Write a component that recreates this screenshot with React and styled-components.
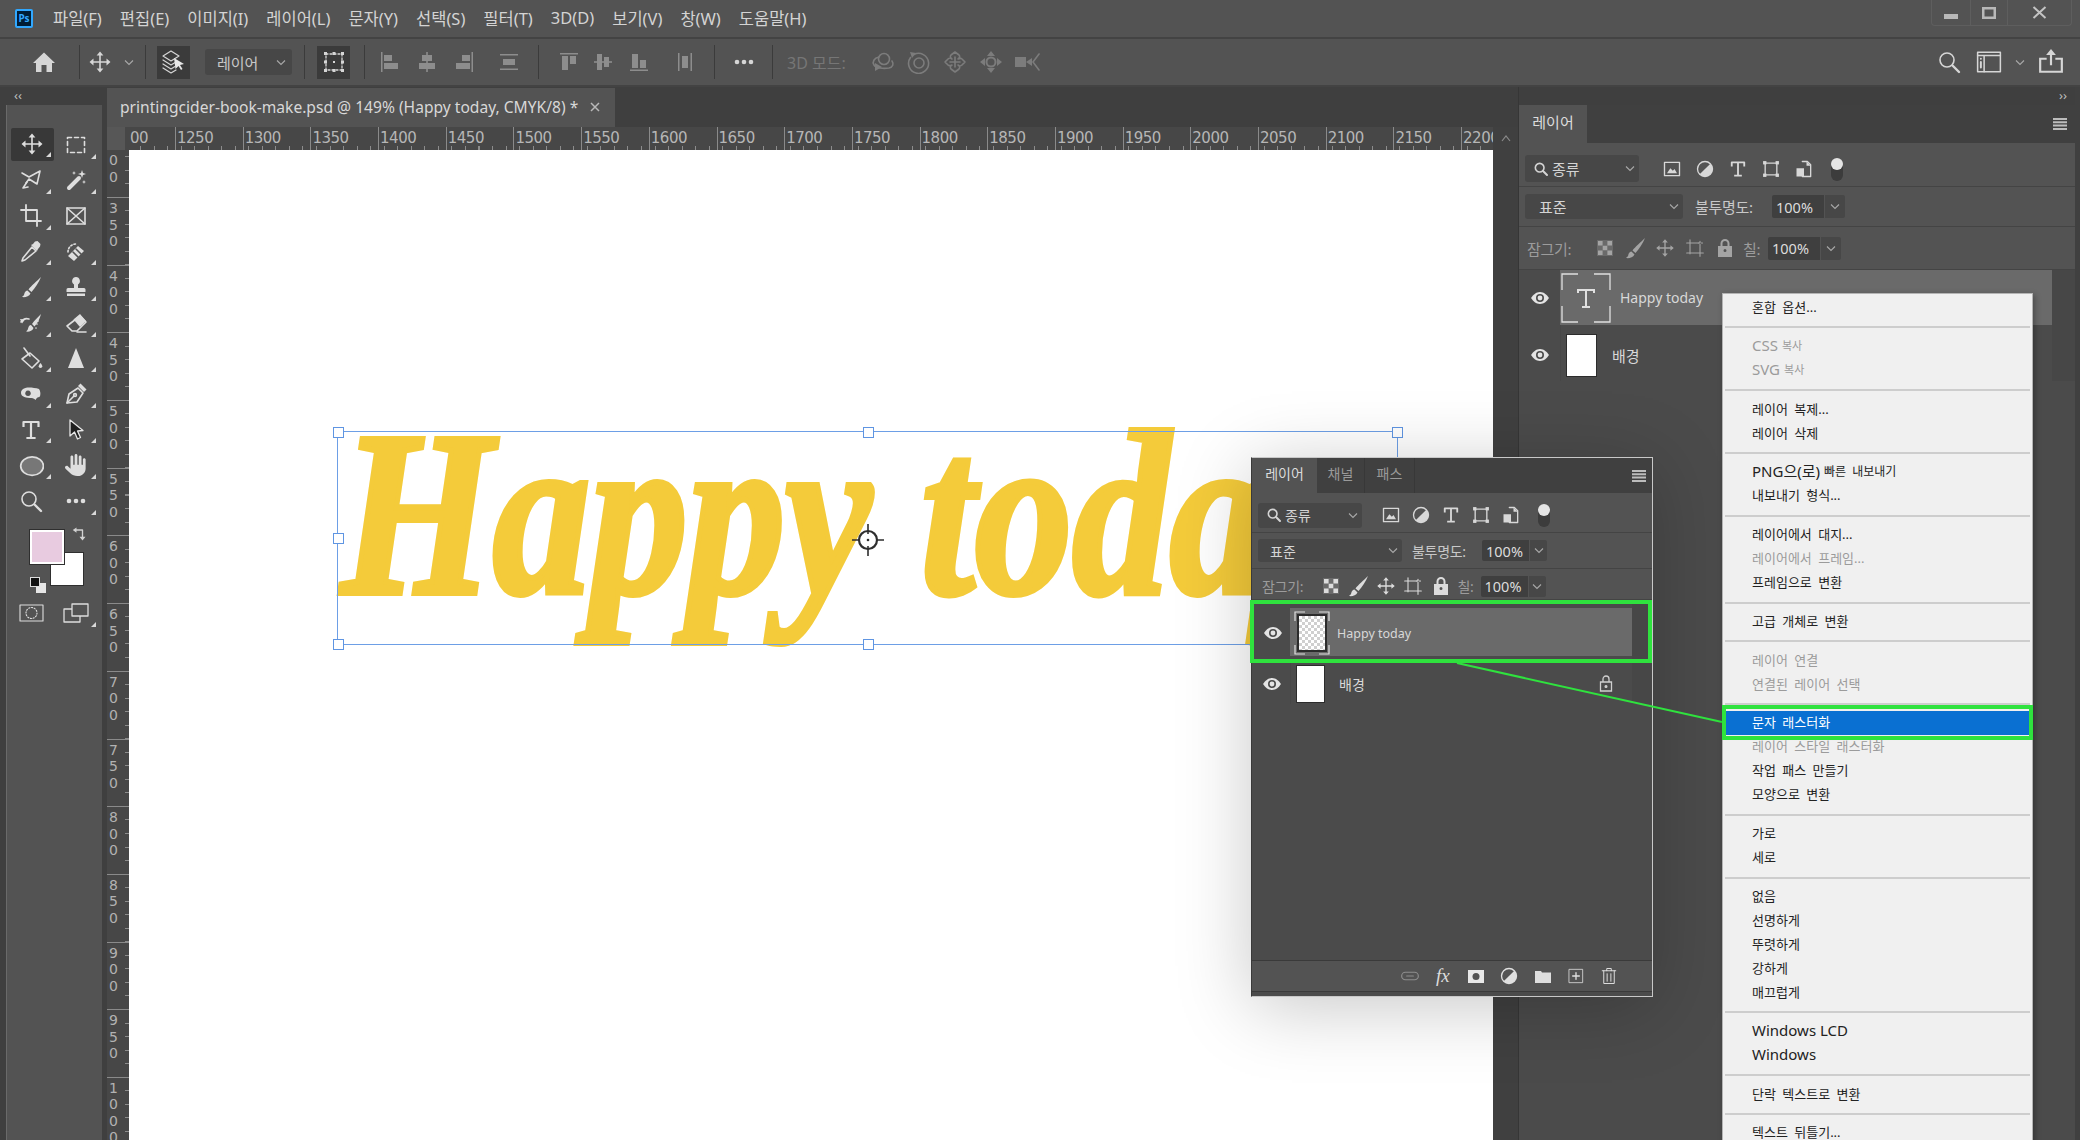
import React from "react";
import styled, { createGlobalStyle } from "styled-components";
import { FaHand } from "react-icons/fa6";

const UI_FONT = `"Noto Sans", "Noto Sans CJK KR", sans-serif`;

const GlobalStyle = createGlobalStyle`
  html, body { margin: 0; padding: 0; background: #404040; }
  * { box-sizing: border-box; }
`;

const Frame = styled.div`
  position: relative;
  width: 2080px;
  height: 1140px;
  overflow: hidden;
  display: flex;
  flex-direction: column;
  background: #404040;
  font-family: ${UI_FONT};
  color: #d2d2d2;
`;

/* title bar */
const TitleBar = styled.div`
  height: 37px;
  flex: none;
  display: flex;
  align-items: flex-start;
  background: #535353;
`;
const PsLogo = styled.div`
  width: 18px;
  height: 19px;
  margin: 9px 20px 0 15px;
  flex: none;
  border: 2px solid #31a8ff;
  border-radius: 2px;
  background: #001e36;
  color: #31a8ff;
  font-size: 10px;
  font-weight: 700;
  line-height: 15px;
  text-align: center;
`;
const MenuBar = styled.div`
  display: flex;
  gap: 18px;
  height: 37px;
  padding-bottom: 2px;
  align-items: center;
`;
const MenuLabel = styled.span`
  font-size: 16.5px;
  color: #d4d4d4;
  white-space: nowrap;
`;
const WindowControls = styled.div`
  margin-left: auto;
  margin-right: 8px;
  display: flex;
  height: 26px;
  border: 1px solid #5e5e5e;
  border-top: 0;
  border-radius: 0 0 4px 4px;
`;
const WinButton = styled.div`
  width: ${(p) => p.$w}px;
  display: flex;
  align-items: center;
  justify-content: center;
  border-left: ${(p) => (p.$first ? "0" : "1px solid #5e5e5e")};
`;

/* options bar */
const OptionsBar = styled.div`
  height: 50px;
  flex: none;
  display: flex;
  align-items: center;
  padding: 0 11px 0 9px;
  background: #535353;
  border-top: 2px solid #434343;
  border-bottom: 2px solid #434343;
  color: #d6d6d6;
`;
const Cell = styled.div`
  width: ${(p) => p.$w}px;
  margin-left: ${(p) => p.$ml || 0}px;
  flex: none;
  display: flex;
  align-items: center;
  justify-content: center;
  color: ${(p) => p.$color || "inherit"};
`;
const OptSep = styled.div`
  width: 1px;
  height: 34px;
  flex: none;
  margin-left: ${(p) => p.$ml || 0}px;
  background: #3b3b3b;
`;
const DarkButton = styled.div`
  width: 33px;
  height: 33px;
  flex: none;
  margin-left: ${(p) => p.$ml || 0}px;
  display: flex;
  align-items: center;
  justify-content: center;
  background: #3b3b3b;
`;
const OptSelect = styled.div`
  width: 87px;
  height: 26px;
  margin-left: 15px;
  flex: none;
  display: flex;
  align-items: center;
  justify-content: space-between;
  padding: 0 6px 0 12px;
  border-radius: 3px;
  background: #474747;
  font-size: 15px;
  color: #c8c8c8;
`;
const DimLabel = styled.span`
  margin-left: 14px;
  width: 63px;
  flex: none;
  font-size: 16px;
  color: #767676;
  white-space: nowrap;
`;
const Spacer = styled.div`
  flex: 1;
`;

/* workspace */
const Workspace = styled.div`
  flex: 1;
  display: flex;
  min-height: 0;
`;
const ToolDock = styled.div`
  width: 107px;
  flex: none;
  display: flex;
  flex-direction: column;
  background: #3f3f3f;
  padding-right: 5px;
`;
const CollapseBar = styled.div`
  height: 18px;
  flex: none;
  display: flex;
  align-items: center;
  justify-content: ${(p) => (p.$right ? "flex-end" : "flex-start")};
  padding: 0 8px 3px 14px;
  font-size: 13px;
  color: #bdbdbd;
  background: #3f3f3f;
`;
const ToolPanel = styled.div`
  flex: 1;
  margin-left: 6px;
  border-left: 1px solid #6a6a6a;
  background: #535353;
  padding: 22px 0 0 1.5px;
`;
const ToolGrid = styled.div`
  display: grid;
  grid-template-columns: 45px 45px;
  grid-auto-rows: 35.6px;
`;
const ToolCell = styled.div`
  position: relative;
  display: flex;
  align-items: center;
  justify-content: center;
  color: #dedede;
  background: ${(p) => (p.$active ? "#383838" : "transparent")};
  border-radius: 2px;
  margin: ${(p) => (p.$active ? "1px 0 2px 2px" : "0")};
  &::after {
    content: "";
    display: ${(p) => (p.$corner ? "block" : "none")};
    position: absolute;
    right: 3px;
    bottom: 4px;
    border-style: solid;
    border-width: 0 0 5px 5px;
    border-color: transparent transparent #d8d8d8 transparent;
  }
`;
const SwatchBox = styled.div`
  position: relative;
  height: 62px;
  margin-top: 11px;
`;
const Swatch = styled.div`
  position: absolute;
  left: ${(p) => p.$x}px;
  top: ${(p) => p.$y}px;
  width: ${(p) => p.$s}px;
  height: ${(p) => p.$s}px;
  background: ${(p) => p.$c};
  border: ${(p) => p.$border || "none"};
  outline: ${(p) => p.$outline || "none"};
`;
const MaskRow = styled.div`
  display: grid;
  grid-template-columns: 45px 45px;
  height: 36px;
  margin-top: 3px;
`;

const DocColumn = styled.div`
  flex: 1;
  min-width: 0;
  display: flex;
  flex-direction: column;
`;
const TabRow = styled.div`
  height: 40px;
  flex: none;
  display: flex;
  background: #3f3f3f;
`;
const DocTab = styled.div`
  width: 508px;
  display: flex;
  align-items: center;
  justify-content: space-between;
  padding: 0 15px 2px 13px;
  margin-top: 1px;
  background: #535353;
  font-size: 15.6px;
  color: #d8d8d8;
  white-space: nowrap;
`;
const TopRulerRow = styled.div`
  height: 23px;
  flex: none;
  display: flex;
`;
const RulerCorner = styled.div`
  width: 22px;
  flex: none;
  background: #575757;
  border-right: 4px solid #474747;
`;
const TopRuler = styled.div`
  flex: 1;
  min-width: 0;
  overflow: hidden;
  display: flex;
  background-color: #474747;
  background-image: repeating-linear-gradient(
    to right,
    #8c8c8c 0 1px,
    transparent 1px 13.54px
  );
  background-size: 100% 4px;
  background-position: 11px bottom;
  background-repeat: no-repeat;
`;
const TopRulerCell = styled.div`
  width: ${(p) => p.$w}px;
  flex: none;
  padding-left: 1px;
  border-left: ${(p) => (p.$plain ? "0" : "1px solid #8a8a8a")};
  font-family: "DejaVu Sans", sans-serif;
  font-size: 15px;
  line-height: 22px;
  color: #b6b6b6;
  letter-spacing: -0.5px;
  white-space: nowrap;
`;
const GutterTop = styled.div`
  width: 25px;
  flex: none;
  background: #404040;
  display: flex;
  align-items: center;
  justify-content: center;
  color: #8a8a8a;
`;
const DocBody = styled.div`
  flex: 1;
  min-height: 0;
  display: flex;
`;
const LeftRuler = styled.div`
  width: 22px;
  flex: none;
  overflow: hidden;
  background-color: #474747;
  background-image: repeating-linear-gradient(
    to bottom,
    #8c8c8c 0 1px,
    transparent 1px 13.54px
  );
  background-size: 4px 100%;
  background-position: right 6px;
  background-repeat: no-repeat;
`;
const LeftRulerCell = styled.div`
  height: ${(p) => p.$h}px;
  display: flex;
  flex-direction: column;
  padding: 2px 0 0 2px;
  border-top: ${(p) => (p.$plain ? "0" : "1px solid #8a8a8a")};
  font-family: "DejaVu Sans", sans-serif;
  font-size: 14px;
  line-height: 16.5px;
  color: #b2b2b2;
  overflow: hidden;
`;
const Canvas = styled.div`
  position: relative;
  flex: 1;
  background: #fff;
  overflow: hidden;
`;
const ArtText = styled.div`
  position: absolute;
  left: 212px;
  top: 247px;
  font-family: "Liberation Serif", serif;
  font-style: italic;
  font-weight: 700;
  font-size: 235px;
  line-height: 1;
  color: #f4cb3a;
  -webkit-text-stroke: 6px #f4cb3a;
  white-space: nowrap;
  transform-origin: left top;
  transform: scaleX(0.83);
`;
const SelectBox = styled.div`
  position: absolute;
  left: 208px;
  top: 281px;
  width: 1061px;
  height: 214px;
  border: 1px solid #6d9fe6;
`;
const Handle = styled.div`
  position: absolute;
  left: ${(p) => p.$x}%;
  top: ${(p) => p.$y}%;
  width: 11px;
  height: 11px;
  margin: -5px 0 0 -5px;
  background: #fff;
  border: 1px solid #5f95e2;
`;
const Anchor = styled.svg`
  position: absolute;
  left: 722px;
  top: 373px;
`;
const Gutter = styled.div`
  width: 25px;
  flex: none;
  background: #404040;
`;

/* layer panels */
const RightDock = styled.div`
  width: 562px;
  flex: none;
  display: flex;
  flex-direction: column;
  background: #404040;
  border-left: 1px solid #363636;
  padding-right: 5px;
`;
const PanelBody = styled.div`
  flex: 1;
  display: flex;
  flex-direction: column;
  background: #4b4b4b;
  min-height: 0;
`;
const TabStrip = styled.div`
  height: ${(p) => p.$h}px;
  flex: none;
  display: flex;
  align-items: stretch;
  background: #404040;
`;
const PanelTab = styled.div`
  width: ${(p) => p.$w}px;
  display: flex;
  align-items: center;
  justify-content: center;
  padding-bottom: 5px;
  font-size: ${(p) => p.$size || 15}px;
  color: ${(p) => (p.$on ? "#dcdcdc" : "#9a9a9a")};
  background: ${(p) => (p.$on ? "#535353" : "transparent")};
  border-right: ${(p) => (p.$on ? "0" : "1px solid #383838")};
`;
const PanelMenu = styled.div`
  margin-left: auto;
  width: ${(p) => p.$w}px;
  display: flex;
  align-items: center;
  justify-content: center;
`;
const ToolRow = styled.div`
  height: ${(p) => p.$h}px;
  flex: none;
  display: flex;
  align-items: center;
  padding-left: ${(p) => p.$pad}px;
  padding-top: ${(p) => p.$pt || 0}px;
  background: #535353;
  border-bottom: 1px solid #444;
  font-size: ${(p) => p.$size || 15}px;
  color: ${(p) => p.$color || "#d8d8d8"};
`;
const Field = styled.div`
  width: ${(p) => p.$w}px;
  height: ${(p) => p.$h}px;
  margin-left: ${(p) => p.$ml || 0}px;
  flex: none;
  display: flex;
  align-items: center;
  gap: 3px;
  padding: 0 4px 0 ${(p) => p.$pl || 6}px;
  border-radius: 3px;
  background: #474747;
  color: #d4d4d4;
  white-space: nowrap;
  & > svg:last-child {
    margin-left: auto;
  }
`;
const InputField = styled.div`
  width: ${(p) => p.$w}px;
  height: ${(p) => p.$h}px;
  margin-left: ${(p) => p.$ml || 0}px;
  flex: none;
  display: flex;
  align-items: center;
  padding-left: 4px;
  background: #3f3f3f;
  border-radius: 2px 0 0 2px;
  font-size: 14.5px;
  color: #dcdcdc;
`;
const InputChevron = styled.div`
  width: ${(p) => p.$w}px;
  height: ${(p) => p.$h}px;
  margin-left: 1px;
  flex: none;
  display: flex;
  align-items: center;
  justify-content: center;
  background: #474747;
  border-radius: 0 2px 2px 0;
`;
const RowLabel = styled.span`
  width: ${(p) => p.$w}px;
  margin-left: ${(p) => p.$ml || 0}px;
  flex: none;
  color: ${(p) => (p.$dim ? "#9c9c9c" : "#c8c8c8")};
  white-space: nowrap;
  letter-spacing: -0.3px;
`;
const LayerList = styled.div`
  flex: 1;
  display: flex;
  flex-direction: column;
  background: #4b4b4b;
`;
const LayerRow = styled.div`
  height: ${(p) => p.$h}px;
  flex: none;
  display: flex;
  border: ${(p) => (p.$framed ? "4px solid #2fe23e" : "0")};
  margin-left: ${(p) => (p.$framed ? "-2px" : "0")};
  background: #4b4b4b;
`;
const EyeCell = styled.div`
  width: ${(p) => p.$w}px;
  flex: none;
  display: flex;
  align-items: center;
  justify-content: center;
  padding: ${(p) => p.$pt || 0}px 0 0 ${(p) => p.$pl || 0}px;
  color: #e4e4e4;
`;
const LayerMain = styled.div`
  flex: 1;
  min-width: 0;
  display: flex;
  align-items: center;
  gap: ${(p) => p.$gap}px;
  padding: ${(p) => p.$pt || 0}px 0 0 ${(p) => p.$pl || 0}px;
  margin: ${(p) => (p.$framed ? "4px 0 3px" : "0")};
  background: ${(p) => (p.$on ? "#6a6a6a" : "transparent")};
  font-size: ${(p) => p.$size}px;
  color: #d8d8d8;
  border-left: 1px solid ${(p) => (p.$on ? "#6a6a6a" : "#474747")};
`;
const LayerStrip = styled.div`
  width: ${(p) => p.$w}px;
  flex: none;
  background: #474747;
`;
const WhiteThumb = styled.div`
  width: ${(p) => p.$w}px;
  height: ${(p) => p.$h}px;
  flex: none;
  background: #fff;
  border: 1px solid #2c2c2c;
`;
const CheckerThumb = styled.div`
  position: relative;
  width: 30px;
  height: 38px;
  flex: none;
  border: 2px solid #2c2c2c;
  background: repeating-conic-gradient(#cfcfcf 0 25%, #fff 0 50%) 0 0 / 6px 6px;
  & > svg {
    position: absolute;
    left: -5px;
    top: -5px;
  }
`;
const LockSlot = styled.div`
  margin-left: auto;
  margin-right: ${(p) => p.$mr}px;
  display: flex;
  color: #cfcfcf;
`;

const FloatingPanel = styled.div`
  position: absolute;
  left: 1251px;
  top: 457px;
  width: 402px;
  height: 540px;
  display: flex;
  flex-direction: column;
  background: #4b4b4b;
  border: 1px solid #c8c8c8;
  border-left-color: #3a3a3a;
  box-shadow: 0 10px 70px rgba(0, 0, 0, 0.22);
`;
const BottomBar = styled.div`
  height: 32px;
  flex: none;
  margin-bottom: 4px;
  display: flex;
  align-items: center;
  justify-content: flex-end;
  padding-right: 26px;
  background: #535353;
  border-top: 1px solid #3a3a3a;
  border-bottom: 1px solid #3a3a3a;
  color: #e0e0e0;
`;

/* context menu */
const ContextMenu = styled.div`
  position: absolute;
  left: 1722px;
  top: 293px;
  width: 311px;
  height: 900px;
  padding: 2px 2px 0;
  background: #f0f0f0;
  border: 1px solid #b4b4b4;
  box-shadow: 2px 2px 6px rgba(0, 0, 0, 0.3);
  font-size: 13px;
  color: #222;
`;
const MenuItem = styled.div`
  position: relative;
  height: 24px;
  display: flex;
  align-items: center;
  gap: 4px;
  padding: 0 0 3px 27px;
  white-space: nowrap;
  word-spacing: ${(p) => (p.$size ? "0" : "3px")};
  color: ${(p) => (p.$off ? "#9b9b9b" : p.$hot ? "#fff" : "#222")};
  background: ${(p) => (p.$hot ? "#0a70d2" : "transparent")};
  font-size: ${(p) => p.$size || 13}px;
  &::after {
    content: "";
    display: ${(p) => (p.$hot ? "block" : "none")};
    position: absolute;
    inset: -6px -3px -5px -3px;
    border: 4px solid #2fe23e;
  }
`;
const MenuSmall = styled.span`
  font-size: ${(p) => p.$size}px;
  color: ${(p) => p.$color || "inherit"};
`;
const MenuRule = styled.div`
  height: 2px;
  margin: 6.4px 0;
  background: #cdcdcd;
`;
const Connector = styled.svg`
  position: absolute;
  left: 0;
  top: 0;
  pointer-events: none;
`;

/* small drawings */
const Svg = ({ s = 24, w, h, vb = "0 0 24 24", children, ...rest }) => (
  <svg
    width={w || s}
    height={h || s}
    viewBox={vb}
    fill="none"
    stroke="currentColor"
    strokeWidth="1.6"
    strokeLinecap="round"
    strokeLinejoin="round"
    {...rest}
  >
    {children}
  </svg>
);
const F = { fill: "currentColor", stroke: "none" };

const Chev = ({ c = "#a8a8a8" }) => (
  <svg width="10" height="7" viewBox="0 0 10 7" fill="none" stroke={c} strokeWidth="1.1">
    <path d="M1 1.500 L5 5.500 L9 1.500" />
  </svg>
);
const MoveIcon = ({ s = 24 }) => (
  <Svg s={s}>
    <path d="M12 4v16M4 12h16" />
    <path {...F} d="M12 1.500l3.400 4h-6.800zM12 22.500l3.400-4h-6.800zM1.500 12l4-3.400v6.800zM22.500 12l-4-3.400v6.800z" />
  </Svg>
);
const Marquee = () => (
  <Svg><rect x="3.500" y="4.500" width="17" height="15" strokeDasharray="4 3" /></Svg>
);
const Lasso = () => (
  <Svg>
    <path d="M3 5l7 4 11-6-3 13-8-5-3 4" />
    <path d="M8 14l-4 6 5-1" />
  </Svg>
);
const Wand = () => (
  <Svg>
    <path strokeWidth="4" d="M5 20L15 10" />
    <path {...F} d="M18 2l1 3 3 1-3 1-1 3-1-3-3-1 3-1zM10 3l.6 1.400L12 5l-1.400.6L10 7l-.6-1.400L8 5l1.400-.6zM20 12l.6 1.400 1.400.6-1.400.6-.6 1.400-.6-1.400-1.400-.6 1.400-.6z" />
  </Svg>
);
const Crop = () => (
  <Svg><path d="M2 6h4M7 1v16h13M7 6h11v16M20 17h2" strokeWidth="1.800" /></Svg>
);
const FrameTool = () => (
  <Svg>
    <rect x="3" y="4" width="18" height="16" />
    <path d="M3 4l18 16M21 4L3 20" />
  </Svg>
);
const Dropper = () => (
  <Svg>
    <path d="M13 7L4 18l-1 3 3-1 11-9z" />
    <path {...F} d="M12 5l2-1 2-2.500 2.500-.5 3 3-.5 2.500L19 9l-1 2z" />
  </Svg>
);
const Heal = () => (
  <Svg>
    <path {...F} d="M4 16L14 6l6 5-10 10z" />
    <path d="M4 12c0-5 4-8 8-8" strokeDasharray="1.500 2" />
    <path stroke="#535353" d="M9 12l5 5M12 9l5 5" />
  </Svg>
);
const Brush = () => (
  <Svg>
    <path {...F} d="M22 2C18 6 12 11 9.500 14.500l3 2.500C16 13 20 7 22 2zM8.500 15.500c-3 .5-3 3.500-3.500 4.500-.3.8-1.500 1.500-2 2 3 .5 7-.3 8.500-3.500z" />
  </Svg>
);
const Stamp = () => (
  <Svg>
    <path {...F} d="M12 2a4 4 0 0 1 2 7.400V13h6a1.500 1.500 0 0 1 1.500 1.500V17h-19v-2.500A1.500 1.500 0 0 1 4 13h6V9.400A4 4 0 0 1 12 2zM3 18.500h18V21H3z" />
  </Svg>
);
const HistoryBrush = () => (
  <Svg>
    <path {...F} d="M22 3c-3 3-7 7-9 10l2.500 2.500c3-3.500 5.500-8 6.500-12.500zM12 14c-3 .5-2.500 3.500-3.500 5-.3.5-1 1-1.500 1.500 2.500.5 6.500-.3 7.500-3.500z" />
    <path d="M2 11c2-3 5-4 8-3" />
    <path {...F} d="M1 8l5 .5-3 4z" />
    <path d="M18 13v.1M17 17v.1M19 10v.1" />
  </Svg>
);
const Eraser = () => (
  <Svg>
    <path d="M3 15l5 5h5l9-9-6-6z" />
    <path {...F} d="M9.500 8.500L16 3l6 7-6 6z" />
    <path d="M13 21h9" />
  </Svg>
);
const Bucket = () => (
  <Svg>
    <path d="M11 7l9 8-7 7-10-9z" />
    <path d="M5 2l6 8" />
    <path {...F} d="M21.500 17c1.300 1.500 1.800 2.500 1.800 3.300a1.800 1.800 0 0 1-3.600 0c0-.8.500-1.800 1.800-3.300z" />
  </Svg>
);
const Triangle = () => (
  <Svg><path {...F} d="M12 2l8 20H4z" /></Svg>
);
const Smudge = () => (
  <Svg>
    <path {...F} fillRule="evenodd" d="M2 11c0-4 4-5.500 8-5.500 3 0 7 .5 10 1.500 1.500 2 2 6 .5 8-2 0-3 1-4 3-1-1-2-2-4-2-5 0-10.500-1-10.500-5zM9 8.500a2.800 2.800 0 1 0 .01 0z" />
  </Svg>
);
const Pen = () => (
  <Svg>
    <path d="M3 21l2-9 9-6 5 5-6 9z" />
    <path d="M3 21l7-7" />
    <circle cx="11" cy="13" r="1.400" />
    <path {...F} d="M14 4l2.500-2.500 6 6L20 10z" />
  </Svg>
);
const TypeIcon = ({ s = 24 }) => (
  <Svg s={s}>
    <path strokeWidth="2.200" d="M12 4v16M4.500 8V4h15v4M8.500 20h7" strokeLinecap="square" />
  </Svg>
);
const ArrowTool = () => (
  <Svg>
    <path d="M6 2l0 16 4.500-4 3 7 3-1.500-3-6.500 5.500-.5z" fill="#1f1f1f" stroke="#e6e6e6" strokeWidth="1.300" />
  </Svg>
);
const Ellipse = () => (
  <Svg s={26}><ellipse cx="13" cy="13" rx="10.500" ry="8.500" fill="#777" stroke="#ddd" /></Svg>
);
const Zoom = ({ s = 24 }) => (
  <Svg s={s}>
    <circle cx="10" cy="10" r="7" />
    <path strokeWidth="2.400" d="M15.500 15.500L22 22" />
  </Svg>
);
const Dots = () => (
  <Svg>
    <circle {...F} cx="5" cy="12" r="2.300" />
    <circle {...F} cx="12" cy="12" r="2.300" />
    <circle {...F} cx="19" cy="12" r="2.300" />
  </Svg>
);
const Swap = () => (
  <Svg s={18}>
    <path d="M5 4h9v10" strokeWidth="1.800" />
    <path {...F} d="M1 4l5-3.500v7zM14 18l-4-5h8z" />
  </Svg>
);
const QuickMask = () => (
  <Svg w={25} h={18} vb="0 0 25 18">
    <rect x="1" y="1" width="23" height="16" strokeWidth="1.100" />
    <circle cx="12.500" cy="9" r="5.500" strokeDasharray="1.200 1.600" strokeWidth="1.100" />
  </Svg>
);
const ScreenMode = () => (
  <Svg w={26} h={20} vb="0 0 26 20" strokeWidth="1.300">
    <rect x="1" y="6" width="16" height="13" />
    <rect x="9" y="1" width="16" height="12" fill="#535353" />
  </Svg>
);

const Home = () => (
  <Svg s={24}>
    <path {...F} d="M12 2.500L23 13h-3v9h-5.500v-7h-5v7H4v-9H1z" />
  </Svg>
);
const LayerStack = () => (
  <Svg s={26} vb="0 0 26 26" strokeWidth="1.200">
    <path d="M10 2l8 5-8 5-8-5zM2 11l8 5 5-3M2 15l8 5 4-2.500M2 19l8 5 5-3" />
    <path fill="#e8e8e8" stroke="none" d="M13 9l10 6-4 1 2.500 4-1.500 1-2.500-4-3 3z" />
  </Svg>
);
const TransformBox = () => (
  <Svg s={24} strokeWidth="1.300">
    <rect x="4" y="4" width="16" height="16" strokeDasharray="2 2" />
    <path {...F} d="M2 2h3v3H2zM19 2h3v3h-3zM2 19h3v3H2zM19 19h3v3h-3zM10.500 2h3v3h-3zM10.500 19h3v3h-3zM2 10.500h3v3H2zM19 10.500h3v3h-3zM11 11h2v2h-2z" />
  </Svg>
);
const BAR = "#8d8d8d";
const AlignIcon = ({ kind }) => {
  const shapes = {
    left: ["M2 2h1.500v20H2z", "M5 5h8v6H5z", "M5 13h14v6H5z"],
    cx: ["M11.200 2h1.600v20h-1.600z", "M7 5h10v6H7z", "M4 13h16v6H4z"],
    right: ["M20.500 2H22v20h-1.500z", "M11 5h8v6h-8z", "M5 13h14v6H5z"],
    dist: ["M3 4h18v1.500H3z", "M3 18.500h18V20H3z", "M6 9h12v6H6z"],
    top: ["M3 3h18v1.500H3z", "M5 6h6v14H5z", "M13 6h6v8h-6z"],
    cy: ["M3 11.200h18v1.600H3z", "M6 4h5v16H6z", "M13 7h5v10h-5z"],
    bottom: ["M3 19.500h18V21H3z", "M5 4h6v14H5z", "M13 10h6v8h-6z"],
    dist2: ["M5 3h1.500v18H5z", "M17.500 3H19v18h-1.500z", "M9 6h6v12H9z"],
  };
  return (
    <svg width="24" height="24" viewBox="0 0 24 24" fill={BAR}>
      {shapes[kind].map((d) => (
        <path key={d} d={d} />
      ))}
    </svg>
  );
};
const Orbit = () => (
  <Svg>
    <circle cx="13" cy="9" r="5.500" />
    <path d="M8 7C3 8 1 12 3 15c2 3 9 4 15 3 4-1 5-4 3-7" />
    <path {...F} d="M4 13l7 4-7 4z" />
  </Svg>
);
const Roll = () => (
  <Svg>
    <path d="M7 4.500a10 10 0 1 1-3.500 3" />
    <circle cx="12" cy="13" r="5" />
    <path {...F} d="M3 2l6 1-4 5z" />
  </Svg>
);
const Pan3d = () => (
  <Svg>
    <path d="M9 9c-2-1-2-3-1-4l4-3 4 3c1 1 1 3-1 4 2-1 3-1 4 0l3 3-3 3c-1 1-3 1-4 0 2 1 2 3 1 4l-4 3-4-3c-1-1-1-3 1-4-2 1-3 1-4 0l-3-3 3-3c1-1 3-1 4 0z" />
    <path d="M12 7v10M7 12h10" />
  </Svg>
);
const Slide3d = () => (
  <Svg>
    <circle cx="12" cy="12" r="4.500" strokeWidth="2" />
    <path {...F} d="M12 1l4 5H8zM12 23l4-5H8zM1 12l5-4v8zM23 12l-5-4v8z" />
  </Svg>
);
const Camera3d = () => (
  <Svg w={26} h={24} vb="0 0 26 24">
    <path {...F} d="M1 7h11v10H1zM12 12l6-4v8z" />
    <path d="M25 4l-6 8 6 8" />
  </Svg>
);
const LayoutIcon = () => (
  <Svg s={26} vb="0 0 24 24" strokeWidth="1.400">
    <rect x="1.500" y="3" width="21" height="18" />
    <path d="M1.500 6h21M7.500 6v15" />
    <path strokeWidth="1.800" d="M4.500 9v.1M4.500 12v5" />
  </Svg>
);
const Share = () => (
  <Svg s={26} vb="0 0 24 24" strokeWidth="1.800" strokeLinecap="butt" strokeLinejoin="miter">
    <path d="M8 9H2v12h20V9h-6M12 15V4" strokeWidth="2" />
    <path {...F} d="M12 0l4.500 5.500h-9z" />
  </Svg>
);
const Hamburger = () => (
  <svg width="14" height="12" viewBox="0 0 14 12" fill="#bcbcbc">
    <path d="M0 0h14v2H0zM0 3.300h14v2H0zM0 6.600h14v2H0zM0 9.900h14v2H0z" />
  </svg>
);
const SearchSmall = () => (
  <Svg s={16} strokeWidth="2.400">
    <circle cx="10" cy="10" r="6.500" />
    <path d="M15 15l6 6" strokeWidth="3" />
  </Svg>
);
const PixelFilter = () => (
  <Svg s={20} strokeWidth="1.600">
    <rect x="3" y="4" width="18" height="16" />
    <path {...F} d="M6 17l4-6 3 3 2-2 3 5z" />
  </Svg>
);
const AdjustFilter = () => (
  <Svg s={20}>
    <circle cx="12" cy="12" r="9" />
    <path {...F} d="M18.400 5.600A9 9 0 0 1 5.600 18.400z" />
  </Svg>
);
const ShapeFilter = () => (
  <Svg s={20}>
    <rect x="5" y="5" width="14" height="14" />
    <rect {...F} x="2.500" y="2.500" width="4" height="4" />
    <rect {...F} x="17.500" y="2.500" width="4" height="4" />
    <rect {...F} x="2.500" y="17.500" width="4" height="4" />
    <rect {...F} x="17.500" y="17.500" width="4" height="4" />
  </Svg>
);
const SmartFilter = () => (
  <Svg s={20}>
    <path d="M10 3h6l4 4v14H10" />
    <path {...F} d="M3 11h9v10H3zM15 3v5h5" />
  </Svg>
);
const PillToggle = () => (
  <svg width="14" height="24" viewBox="0 0 14 24">
    <rect x="1" y="3" width="12" height="21" rx="6" fill="#3c3c3c" />
    <circle cx="7" cy="7" r="6" fill="#e4e4e4" />
  </svg>
);
const Checker = () => (
  <svg width="16" height="16" viewBox="0 0 16 16">
    <rect width="16" height="16" fill="#6a6a6a" />
    <path fill="currentColor" d="M1 1h4.600v4.600H1zM10.400 1H15v4.600h-4.600zM5.700 5.700h4.600v4.600H5.700zM1 10.400h4.600V15H1zM10.400 10.400H15V15h-4.600z" />
  </svg>
);
const ArtboardLock = () => (
  <Svg s={20} strokeWidth="1.300">
    <path d="M2 6h14M6 2v17M2 18h20M18 10v12" />
    <path strokeDasharray="1.500 2" d="M16 6h5M18 4v6" />
  </Svg>
);
const Padlock = () => (
  <svg width="16" height="18" viewBox="0 0 16 18" fill="currentColor">
    <path fillRule="evenodd" d="M8 0a4.500 4.500 0 0 1 4.500 4.500V7H15v11H1V7h2.500V4.500A4.500 4.500 0 0 1 8 0zm0 2a2.500 2.500 0 0 0-2.500 2.500V7h5V4.500A2.500 2.500 0 0 0 8 2zm0 8a1.500 1.500 0 1 0 0 3 1.500 1.500 0 0 0 0-3z" />
  </svg>
);
const OpenLock = () => (
  <svg width="14" height="17" viewBox="0 0 14 17" fill="none" stroke="currentColor" strokeWidth="1.300">
    <path d="M4 7V4a3 3 0 0 1 6 0v3M1.500 7h11v9h-11z" />
    <circle cx="7" cy="11.500" r=".9" fill="currentColor" />
  </svg>
);
const Eye = () => (
  <svg width="18" height="12" viewBox="0 0 18 12">
    <path fill="currentColor" d="M9 0c4 0 7 3 9 6-2 3-5 6-9 6S2 9 0 6c2-3 5-6 9-6z" />
    <circle cx="9" cy="6" r="4" fill="#4b4b4b" />
    <circle cx="9" cy="6" r="2.400" fill="currentColor" />
  </svg>
);
const TextFrame = () => (
  <svg width="50" height="50" viewBox="0 0 50 50" fill="none" stroke="#e0e0e0" strokeWidth="1.300">
    <path d="M17 1H1v16M33 1h16v16M17 49H1V33M33 49h16V33" />
    <path strokeWidth="2" d="M25 17v17M17 20v-3h16v3M21 34h8" />
  </svg>
);
const Brackets = () => (
  <svg width="36" height="44" viewBox="0 0 36 44" fill="none" stroke="#e0e0e0" strokeWidth="1.200">
    <path d="M11 1H1v9M25 1h10v9M11 43H1v-9M25 43h10v-9" />
  </svg>
);
const LinkIcon = () => (
  <Svg s={20} strokeWidth="1.400" style={{ color: "#8e8e8e" }}>
    <rect x="2" y="7.500" width="20" height="9" rx="4.500" />
    <path d="M8 12h8" />
  </Svg>
);
const FxText = styled.span`
  font-family: "Liberation Serif", serif;
  font-style: italic;
  font-size: 19px;
  color: #dcdcdc;
`;
const MaskIcon = () => (
  <svg width="16" height="13" viewBox="0 0 16 13">
    <path fill="#e8e8e8" d="M0 0h16v13H0z" />
    <circle cx="8" cy="6.500" r="3.500" fill="#535353" />
  </svg>
);
const FolderIcon = () => (
  <svg width="16" height="13" viewBox="0 0 16 13" fill="#dedede">
    <path d="M0 1h6l1 1.500h9V13H0z" />
  </svg>
);
const NewLayer = () => (
  <Svg s={16} strokeWidth="1.200">
    <rect x="2" y="2" width="20" height="20" />
    <path strokeWidth="2" d="M12 7v10M7 12h10" />
  </Svg>
);
const Trash = () => (
  <Svg s={18} strokeWidth="1.300">
    <path d="M3 5h18M9 5V2h6v3M5 5v17h14V5M9.500 9v10M14.500 9v10" />
  </Svg>
);

const menus = ["파일(F)", "편집(E)", "이미지(I)", "레이어(L)", "문자(Y)", "선택(S)", "필터(T)", "3D(D)", "보기(V)", "창(W)", "도움말(H)"];

const tools = [
  [<MoveIcon key="a" />, true, true],
  [<Marquee key="a" />, true],
  [<Lasso key="a" />, true],
  [<Wand key="a" />, true],
  [<Crop key="a" />, true],
  [<FrameTool key="a" />, false],
  [<Dropper key="a" />, true],
  [<Heal key="a" />, true],
  [<Brush key="a" />, true],
  [<Stamp key="a" />, true],
  [<HistoryBrush key="a" />, true],
  [<Eraser key="a" />, true],
  [<Bucket key="a" />, true],
  [<Triangle key="a" />, true],
  [<Smudge key="a" />, true],
  [<Pen key="a" />, true],
  [<TypeIcon key="a" />, true],
  [<ArrowTool key="a" />, true],
  [<Ellipse key="a" />, true],
  [<FaHand key="a" size={22} />, true],
  [<Zoom key="a" />, false],
  [<Dots key="a" />, true],
];

const hRuler = [1250, 1300, 1350, 1400, 1450, 1500, 1550, 1600, 1650, 1700, 1750, 1800, 1850, 1900, 1950, 2000, 2050, 2100, 2150, 2200];
const vRuler = ["350", "400", "450", "500", "550", "600", "650", "700", "750", "800", "850", "900", "950", "1000"];

const Digits = ({ value }) => value.split("").map((d, i) => <span key={i}>{d}</span>);

function LayerTools({ m, small }) {
  // the filter, blend and lock rows are the same in both panels, only the sizes differ
  return (
    <>
      <ToolRow $h={m.filterH} $pt={m.filterPt} $pad={6} $size={m.size}>
        <Field $w={m.filterW} $h={m.fieldH + 2} $pl={8}>
          <SearchSmall />
          {"종류"}
          <Chev />
        </Field>
        <Cell $w={m.iconW} $ml={m.filterGap}><PixelFilter /></Cell>
        <Cell $w={m.iconW}><AdjustFilter /></Cell>
        <Cell $w={m.iconW}><TypeIcon s={20} /></Cell>
        <Cell $w={m.iconW}><ShapeFilter /></Cell>
        <Cell $w={m.iconW}><SmartFilter /></Cell>
        <Cell $w={m.iconW} $ml={small ? 3 : 0}><PillToggle /></Cell>
      </ToolRow>
      <ToolRow $h={m.blendH} $pad={6} $size={m.size}>
        <Field $w={m.blendW} $h={m.fieldH} $pl={small ? 12 : 14}>
          {"표준"}
          <Chev />
        </Field>
        <RowLabel $w={m.labelW} $ml={m.labelGap}>불투명도:</RowLabel>
        <InputField $w={m.inputW} $h={m.inputH} $ml={m.inputGap}>100%</InputField>
        <InputChevron $w={m.chevW} $h={m.inputH}><Chev /></InputChevron>
      </ToolRow>
      <ToolRow $h={m.lockH} $pt={m.lockPt} $pad={m.lockPad} $size={m.size} $color={m.lockColor}>
        <RowLabel $w={m.lockLabelW} $dim>잠그기:</RowLabel>
        <Cell $w={m.lockIconW} $ml={5}><Checker /></Cell>
        <Cell $w={m.lockIconW}><Brush /></Cell>
        <Cell $w={m.lockIconW}><MoveIcon s={20} /></Cell>
        <Cell $w={m.lockIconW}><ArtboardLock /></Cell>
        <Cell $w={m.lockIconW}><Padlock /></Cell>
        <RowLabel $w={20} $ml={3} $dim>칠:</RowLabel>
        <InputField $w={m.inputW} $h={m.inputH} $ml={m.fillGap}>100%</InputField>
        <InputChevron $w={m.chevW} $h={m.inputH}><Chev /></InputChevron>
      </ToolRow>
    </>
  );
}

const dockMetrics = {
  filterH: 44, filterPt: 8, blendH: 40, lockH: 43, lockPt: 0, lockColor: "#a4a4a4", size: 15, fieldH: 25, filterW: 114, filterGap: 16, iconW: 33,
  blendW: 158, labelW: 69, labelGap: 12, inputW: 52, inputH: 23, inputGap: 8, chevW: 20,
  lockPad: 8, lockLabelW: 58, lockIconW: 30, fillGap: 5,
};
const floatMetrics = {
  filterH: 40, filterPt: 5, blendH: 36, lockH: 31, lockPt: 4, lockColor: "#dcdcdc", size: 14, fieldH: 23, filterW: 104, filterGap: 14, iconW: 30,
  blendW: 144, labelW: 64, labelGap: 10, inputW: 47, inputH: 21, inputGap: 6, chevW: 17,
  lockPad: 10, lockLabelW: 50, lockIconW: 27.5, fillGap: 3,
};

export default function App() {
  return (
    <Frame>
      <GlobalStyle />
      <TitleBar>
        <PsLogo>Ps</PsLogo>
        <MenuBar>
          {menus.map((m) => (
            <MenuLabel key={m}>{m}</MenuLabel>
          ))}
        </MenuBar>
        <WindowControls>
          <WinButton $w={38} $first>
            <svg width="14" height="6" viewBox="0 0 14 6" fill="#b8b8b8" style={{ marginTop: 8 }}><rect width="14" height="5" /></svg>
          </WinButton>
          <WinButton $w={37}>
            <svg width="14" height="12" viewBox="0 0 14 12" fill="none" stroke="#b8b8b8" strokeWidth="2.500"><rect x="1.250" y="1.250" width="11.500" height="9.500" /></svg>
          </WinButton>
          <WinButton $w={64}>
            <svg width="15" height="13" viewBox="0 0 15 13" stroke="#c4c4c4" strokeWidth="2"><path d="M1.500 1l12 11M13.500 1l-12 11" /></svg>
          </WinButton>
        </WindowControls>
      </TitleBar>

      <OptionsBar>
        <Cell $w={70}><Home /></Cell>
        <OptSep />
        <Cell $w={40}><MoveIcon /></Cell>
        <Cell $w={18}><Chev /></Cell>
        <OptSep $ml={7} />
        <DarkButton $ml={11}><LayerStack /></DarkButton>
        <OptSelect>
          레이어
          <Chev />
        </OptSelect>
        <OptSep $ml={12} />
        <DarkButton $ml={12}><TransformBox /></DarkButton>
        <OptSep $ml={14} />
        <Cell $w={36} $ml={8}><AlignIcon kind="left" /></Cell>
        <Cell $w={36}><AlignIcon kind="cx" /></Cell>
        <Cell $w={36}><AlignIcon kind="right" /></Cell>
        <Cell $w={36} $ml={10}><AlignIcon kind="dist" /></Cell>
        <OptSep $ml={11} />
        <Cell $w={34} $ml={13}><AlignIcon kind="top" /></Cell>
        <Cell $w={34}><AlignIcon kind="cy" /></Cell>
        <Cell $w={38}><AlignIcon kind="bottom" /></Cell>
        <Cell $w={46} $ml={4}><AlignIcon kind="dist2" /></Cell>
        <OptSep $ml={6} />
        <Cell $w={57}><Dots /></Cell>
        <OptSep />
        <DimLabel>3D 모드:</DimLabel>
        <Cell $w={36} $ml={15} $color="#7c7c7c"><Orbit /></Cell>
        <Cell $w={36} $color="#7c7c7c"><Roll /></Cell>
        <Cell $w={36} $color="#7c7c7c"><Pan3d /></Cell>
        <Cell $w={36} $color="#7c7c7c"><Slide3d /></Cell>
        <Cell $w={36} $color="#7c7c7c"><Camera3d /></Cell>
        <Spacer />
        <Cell $w={36}><Zoom /></Cell>
        <Cell $w={36} $ml={4}><LayoutIcon /></Cell>
        <Cell $w={18} $ml={4}><Chev /></Cell>
        <Cell $w={36} $ml={4}><Share /></Cell>
      </OptionsBar>

      <Workspace>
        <ToolDock>
          <CollapseBar>‹‹</CollapseBar>
          <ToolPanel>
            <ToolGrid>
              {tools.map(([icon, corner, active], i) => (
                <ToolCell key={i} $corner={corner} $active={active}>
                  {icon}
                </ToolCell>
              ))}
            </ToolGrid>
            <SwatchBox>
              <Swatch $x={41.5} $y={22} $s={34} $c="#fff" $border="1px solid #2f2f2f" />
              <Swatch $x={21.5} $y={0} $s={34} $c="#e8cbe0" $border="2px solid #fff" $outline="1px solid #2f2f2f" />
              <Swatch $x={27.5} $y={53} $s={10} $c="#e6e6e6" />
              <Swatch $x={21.5} $y={47} $s={10} $c="#111" $border="1px solid #ddd" />
              <Swatch $x={63.5} $y={-3} $s={18} $c="transparent"><Swap /></Swatch>
            </SwatchBox>
            <MaskRow>
              <ToolCell><QuickMask /></ToolCell>
              <ToolCell $corner><ScreenMode /></ToolCell>
            </MaskRow>
          </ToolPanel>
        </ToolDock>

        <DocColumn>
          <TabRow>
            <DocTab>
              printingcider-book-make.psd @ 149% (Happy today, CMYK/8) *
              <svg width="10" height="10" viewBox="0 0 10 10" stroke="#b8b8b8" strokeWidth="1.500"><path d="M1 1l8 8M9 1L1 9" /></svg>
            </DocTab>
          </TabRow>
          <TopRulerRow>
            <RulerCorner />
            <TopRuler>
              <TopRulerCell $w={46} $plain>00</TopRulerCell>
              {hRuler.map((n) => (
                <TopRulerCell key={n} $w={67.7}>{n}</TopRulerCell>
              ))}
            </TopRuler>
            <GutterTop>
              <svg width="10" height="7" viewBox="0 0 10 7" fill="none" stroke="currentColor" strokeWidth="1.200"><path d="M1 6l4-5 4 5" /></svg>
            </GutterTop>
          </TopRulerRow>
          <DocBody>
            <LeftRuler>
              <LeftRulerCell $h={47} $plain>
                <Digits value="00" />
              </LeftRulerCell>
              {vRuler.map((n) => (
                <LeftRulerCell key={n} $h={67.7}>
                  <Digits value={n} />
                </LeftRulerCell>
              ))}
            </LeftRuler>
            <Canvas>
              <ArtText>Happy today</ArtText>
              <SelectBox>
                {[0, 50, 100].flatMap((x) =>
                  [0, 50, 100].map((y) =>
                    x === 50 && y === 50 ? null : <Handle key={`${x}-${y}`} $x={x} $y={y} />
                  )
                )}
              </SelectBox>
              <Anchor width="34" height="34" viewBox="0 0 34 34" fill="none" stroke="#2e2e2e">
                <circle cx="17" cy="17" r="9" strokeWidth="2.200" fill="#fff" />
                <path strokeWidth="1.600" d="M17 1v10M17 23v10M1 17h8M25 17h8" />
                <circle cx="17" cy="17" r="1.300" fill="#2e2e2e" stroke="none" />
              </Anchor>
            </Canvas>
            <Gutter />
          </DocBody>
        </DocColumn>

        <RightDock>
          <CollapseBar $right>››</CollapseBar>
          <PanelBody>
            <TabStrip $h={38}>
              <PanelTab $w={68} $on>레이어</PanelTab>
              <PanelMenu $w={30}><Hamburger /></PanelMenu>
            </TabStrip>
            <LayerTools m={dockMetrics} />
            <LayerList>
              <LayerRow $h={55}>
                <EyeCell $w={41}><Eye /></EyeCell>
                <LayerMain $on $gap={9} $size={14}>
                  <TextFrame />
                  Happy today
                </LayerMain>
                <LayerStrip $w={23} />
              </LayerRow>
              <LayerRow $h={56}>
                <EyeCell $w={41} $pt={4}><Eye /></EyeCell>
                <LayerMain $gap={15} $pl={5} $pt={4} $size={15}>
                  <WhiteThumb $w={31} $h={43} />
                  배경
                </LayerMain>
                <LayerStrip $w={23} />
              </LayerRow>
            </LayerList>
          </PanelBody>
        </RightDock>
      </Workspace>

      <FloatingPanel>
        <TabStrip $h={35}>
          <PanelTab $w={65} $on $size={14}>레이어</PanelTab>
          <PanelTab $w={48} $size={14}>채널</PanelTab>
          <PanelTab $w={50} $size={14}>패스</PanelTab>
          <PanelMenu $w={26}><Hamburger /></PanelMenu>
        </TabStrip>
        <LayerTools m={floatMetrics} small />
        <LayerList>
          <LayerRow $h={63} $framed>
            <EyeCell $w={36} $pt={2} $pl={2}><Eye /></EyeCell>
            <LayerMain $on $framed $gap={10} $pl={6} $pt={2} $size={12.5}>
              <CheckerThumb>
                <Brackets />
              </CheckerThumb>
              Happy today
            </LayerMain>
            <LayerStrip $w={16} />
          </LayerRow>
          <LayerRow $h={41}>
            <EyeCell $w={38} $pl={2}><Eye /></EyeCell>
            <LayerMain $gap={14} $pl={5} $size={14}>
              <WhiteThumb $w={29} $h={38} />
              배경
              <LockSlot $mr={19}><OpenLock /></LockSlot>
            </LayerMain>
            <LayerStrip $w={20} />
          </LayerRow>
        </LayerList>
        <BottomBar>
          <Cell $w={33.3}><LinkIcon /></Cell>
          <Cell $w={33.3}><FxText>fx</FxText></Cell>
          <Cell $w={33.3}><MaskIcon /></Cell>
          <Cell $w={33.3}><AdjustFilter /></Cell>
          <Cell $w={33.3}><FolderIcon /></Cell>
          <Cell $w={33.3}><NewLayer /></Cell>
          <Cell $w={33.3}><Trash /></Cell>
        </BottomBar>
      </FloatingPanel>

      <Connector width="2080" height="1140" viewBox="0 0 2080 1140">
        <path d="M1457 663L1722 722" stroke="#2fe23e" strokeWidth="2" />
      </Connector>

      <ContextMenu>
        <MenuItem>혼합 옵션...</MenuItem>
        <MenuRule />
        <MenuItem $off><MenuSmall $size={15}>CSS</MenuSmall><MenuSmall $size={11}>복사</MenuSmall></MenuItem>
        <MenuItem $off><MenuSmall $size={15}>SVG</MenuSmall><MenuSmall $size={11}>복사</MenuSmall></MenuItem>
        <MenuRule />
        <MenuItem>레이어 복제...</MenuItem>
        <MenuItem>레이어 삭제</MenuItem>
        <MenuRule />
        <MenuItem><MenuSmall $size={15}>PNG으(로)</MenuSmall><MenuSmall $size={12}>빠른 내보내기</MenuSmall></MenuItem>
        <MenuItem>내보내기 형식...</MenuItem>
        <MenuRule />
        <MenuItem>레이어에서 대지...</MenuItem>
        <MenuItem $off>레이어에서 프레임...</MenuItem>
        <MenuItem>프레임으로 변환</MenuItem>
        <MenuRule />
        <MenuItem>고급 개체로 변환</MenuItem>
        <MenuRule />
        <MenuItem $off>레이어 연결</MenuItem>
        <MenuItem $off>연결된 레이어 선택</MenuItem>
        <MenuRule />
        <MenuItem $hot>문자 래스터화</MenuItem>
        <MenuItem $off>레이어 스타일 래스터화</MenuItem>
        <MenuItem>작업 패스 만들기</MenuItem>
        <MenuItem>모양으로 변환</MenuItem>
        <MenuRule />
        <MenuItem>가로</MenuItem>
        <MenuItem>세로</MenuItem>
        <MenuRule />
        <MenuItem>없음</MenuItem>
        <MenuItem>선명하게</MenuItem>
        <MenuItem>뚜렷하게</MenuItem>
        <MenuItem>강하게</MenuItem>
        <MenuItem>매끄럽게</MenuItem>
        <MenuRule />
        <MenuItem $size={15}>Windows LCD</MenuItem>
        <MenuItem $size={15}>Windows</MenuItem>
        <MenuRule />
        <MenuItem>단락 텍스트로 변환</MenuItem>
        <MenuRule />
        <MenuItem>텍스트 뒤틀기...</MenuItem>
      </ContextMenu>
    </Frame>
  );
}
